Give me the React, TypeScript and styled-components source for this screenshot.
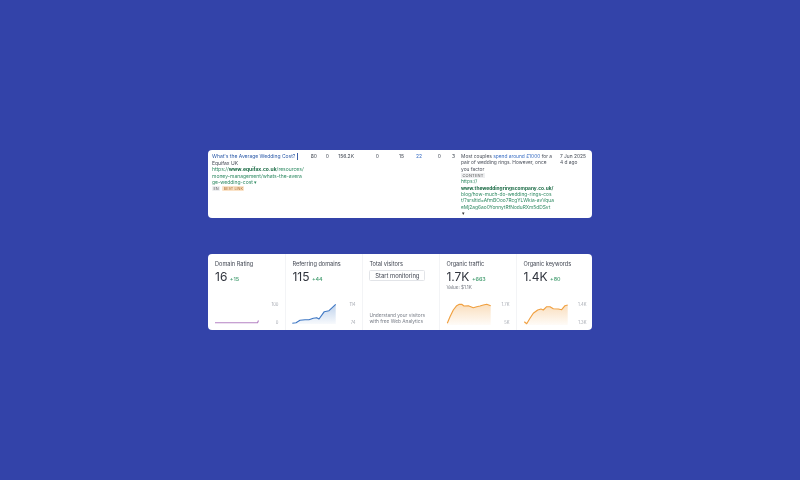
import React from "react";
import styled, { createGlobalStyle } from "styled-components";

const Global = createGlobalStyle`
  html, body { margin: 0; padding: 0; width: 800px; height: 480px; overflow: hidden; background: #3343a9; }
  * { box-sizing: border-box; }
`;
const Page = styled.div`
  width: 800px; height: 480px; padding-top: 150px; display: flex; flex-direction: column; align-items: center; gap: 36px;
  font-family: Inter, "Liberation Sans", sans-serif; color: #3a3f4a; filter: blur(0.35px);
`;
const Card = styled.div`
  width: 384px; background: #fff; border-radius: 4px; overflow: hidden;
`;
const Row = styled(Card)`
  height: 68px; display: grid; grid-template-columns: 101px 8px 12px 25px 25px 25px 18px 19px 14px 105px 1fr;
  font-size: 5px; line-height: 6.35px; padding-top: 3px;
`;
const Cell = styled.div<{ $blue?: boolean }>`
  text-align: right; white-space: nowrap; color: ${p => (p.$blue ? "#3b6fc4" : "#444a55")};
`;
const First = styled.div`padding-left: 4px; display: flex; flex-direction: column; white-space: nowrap;`;
const TitleLine = styled.div`color: #2c5aa8; display: flex; align-items: flex-start;`;
const Caret = styled.span`flex: none; width: 1px; height: 7px; background: #3b5fa8; margin-left: 1.5px;`;
const Source = styled.div`color: #444a55;`;
const Url = styled.div`color: #2f8a63; b { color: #1b6b45; font-weight: 700; }`;
const Tags = styled.div`display: flex; gap: 2px; margin-top: 1px; align-items: center;`;
const Tag = styled.span<{ $c: string; $bg: string }>`
  font-size: 3.8px; line-height: 5px; padding: 0 1.5px; border-radius: 1px; color: ${p => p.$c}; background: ${p => p.$bg};
`;
const Snippet = styled.div`color: #4a4f5a; padding-left: 6px; font-size: 4.85px; white-space: nowrap; display: flex; flex-direction: column;`;
const Hl = styled.span`color: #3b6fc4;`;
const Content = styled.span`
  width: fit-content; font-size: 4px; letter-spacing: 0.2px; line-height: 5px; height: 5px; padding: 0 1.5px; margin: 0.7px 0 0.65px; background: #eeeff1; color: #555;
`;
const SnipUrl = styled.div<{ $strong?: boolean }>`
  color: ${p => (p.$strong ? "#1b6b45" : "#2f8a63")}; font-weight: ${p => (p.$strong ? 700 : 400)};
`;
const Dots = styled.div`color: #333; padding-left: 1px;`;
const DateCell = styled.div`color: #444a55; font-size: 4.85px; white-space: nowrap;`;

const Stats = styled(Card)`
  height: 76px; display: grid; grid-template-columns: repeat(5, 77px);
`;
const Head = styled.div`padding: 7px 0 0 7px; display: flex; flex-direction: column;`;
const Label = styled.div`font-size: 5.6px; line-height: 7px; color: #3f4450; white-space: nowrap;`;
const ValueRow = styled.div`display: flex; align-items: baseline; gap: 2.5px; margin-top: 1px; height: 15px;`;
const Value = styled.span`font-size: 12px; line-height: 15px; color: #30343d;`;
const Delta = styled.span`font-size: 5.4px; color: #3f9a6c; font-weight: 500;`;
const Sub = styled.div`font-size: 4.6px; line-height: 6px; color: #70757f; margin-top: 1px;`;
const Btn = styled.div`
  width: 56px; height: 11px; margin-top: 1.5px; border: 0.6px solid #e2e4e8; border-radius: 1.5px;
  font-size: 5.8px; line-height: 10px; text-align: center; color: #3f4450; white-space: nowrap;
`;
const Note = styled.div`margin-top: auto; padding: 0 0 6px 7px; font-size: 4.8px; line-height: 6.2px; color: #777c86; white-space: nowrap;`;
const Chart = styled.svg`display: block; flex: none; margin-top: auto; width: 77px; height: 36px;`;
const Axis = styled.text`font-size: 4.2px; fill: #a5a9b1; font-family: Inter, "Liberation Sans", sans-serif; text-anchor: end;`;
const Stat = styled.div`
  display: flex; flex-direction: column; min-width: 0;
  & + & {
    border-left: 1px solid #f3f4f6;
    ${Head} { padding-left: 6.4px; }
    ${Note} { padding-left: 6.4px; }
    ${Chart} { margin-left: -1px; }
  }
`;

type Pt = [number, number];
type ChartProps = { pts: Pt[]; base?: number; color: string; hi: string; lo: string; id: string };
const Spark = ({ pts, base, color, hi, lo, id }: ChartProps) => {
  const line = pts.map((p, i) => `${i ? "L" : "M"}${p[0]} ${p[1]}`).join(" ");
  const fill = base ? `${line} L${pts[pts.length - 1][0]} ${base} L${pts[0][0]} ${base} Z` : "";
  return (
    <Chart viewBox="0 0 77 36">
      <defs>
        <linearGradient id={id} x1="0" y1="0" x2="0" y2="1">
          <stop offset="0" stopColor={color} stopOpacity="0.34" />
          <stop offset="1" stopColor={color} stopOpacity="0.04" />
        </linearGradient>
      </defs>
      {fill && <path d={fill} fill={`url(#${id})`} />}
      <path d={line} fill="none" stroke={color} strokeWidth="1.15" strokeLinejoin="round" />
      <Axis x="70.5" y="11.5">{hi}</Axis>
      <Axis x="70.5" y="30">{lo}</Axis>
    </Chart>
  );
};

const dr: Pt[] = [[7, 28.7], [49.5, 28.7], [50.5, 26.5]];
const rd: Pt[] = [[7.3, 29.3], [11, 28.7], [15, 26.3], [20, 25.7], [24, 25.7], [28.3, 24.3], [31.7, 23.7], [34, 25], [39.3, 17.7], [44, 16.7], [50.7, 10.3]];
const ot: Pt[] = [[8.3, 29.3], [11, 22.7], [14.3, 16], [17.7, 11.7], [20.3, 10.3], [22.7, 10.3], [25, 12], [29.3, 11.7], [34.3, 13.7], [37.7, 12.7], [41, 12], [44.3, 11], [47.7, 10.3], [51.7, 11.7]];
const ok: Pt[] = [[8.3, 27.7], [10.7, 29.7], [14, 24.3], [17.3, 19.3], [21.7, 16], [25, 15], [27.3, 16], [30.7, 12.7], [34, 12.7], [37.3, 14.7], [42.3, 15], [45.7, 15.7], [49, 11.7], [51.7, 11]];

export default function App() {
  return (
    <Page>
      <Global />
      <Row>
        <First>
          <TitleLine>What's the Average Wedding Cost?<Caret /></TitleLine>
          <Source>Equifax UK</Source>
          <Url>https://<b>www.equifax.co.uk</b>/resources/</Url>
          <Url>money-management/whats-the-avera</Url>
          <Url>ge-wedding-cost ▾</Url>
          <Tags>
            <Tag $c="#555" $bg="#eeeff1">EN</Tag>
            <Tag $c="#a8682a" $bg="#fbe3c8">BEST LINK</Tag>
          </Tags>
        </First>
        <Cell>80</Cell>
        <Cell>0</Cell>
        <Cell>156.2K</Cell>
        <Cell>0</Cell>
        <Cell>15</Cell>
        <Cell $blue>22</Cell>
        <Cell>0</Cell>
        <Cell>3</Cell>
        <Snippet>
          <div>Most couples <Hl>spend around £1000</Hl> for a</div>
          <div>pair of wedding rings. However, once</div>
          <div>you factor</div>
          <Content>CONTENT</Content>
          <SnipUrl>https://</SnipUrl>
          <SnipUrl $strong>www.theweddingringscompany.co.uk/</SnipUrl>
          <SnipUrl>blog/how-much-do-wedding-rings-cos</SnipUrl>
          <SnipUrl>t/?srsltid=AfmBOoo7RcgYLWkia-avVqua</SnipUrl>
          <SnipUrl>eMj2ag6ao0YonnytRfNoduRXm5dDSvt</SnipUrl>
          <Dots>▾</Dots>
        </Snippet>
        <DateCell>
          <div>7 Jun 2025</div>
          <div>4 d ago</div>
        </DateCell>
      </Row>
      <Stats>
        <Stat>
          <Head>
            <Label>Domain Rating</Label>
            <ValueRow><Value>16</Value><Delta>+15</Delta></ValueRow>
          </Head>
          <Spark pts={dr} color="#b583c4" hi="100" lo="0" id="a" />
        </Stat>
        <Stat>
          <Head>
            <Label>Referring domains</Label>
            <ValueRow><Value>115</Value><Delta>+44</Delta></ValueRow>
          </Head>
          <Spark pts={rd} base={30} color="#3f78c4" hi="114" lo="74" id="b" />
        </Stat>
        <Stat>
          <Head>
            <Label>Total visitors</Label>
            <Btn>Start monitoring</Btn>
          </Head>
          <Note>Understand your visitors<br />with free Web Analytics</Note>
        </Stat>
        <Stat>
          <Head>
            <Label>Organic traffic</Label>
            <ValueRow><Value>1.7K</Value><Delta>+663</Delta></ValueRow>
            <Sub>Value: $1.1K</Sub>
          </Head>
          <Spark pts={ot} base={31} color="#f0a040" hi="1.7K" lo="5K" id="c" />
        </Stat>
        <Stat>
          <Head>
            <Label>Organic keywords</Label>
            <ValueRow><Value>1.4K</Value><Delta>+80</Delta></ValueRow>
          </Head>
          <Spark pts={ok} base={31} color="#f0a040" hi="1.4K" lo="1.3K" id="d" />
        </Stat>
      </Stats>
    </Page>
  );
}
